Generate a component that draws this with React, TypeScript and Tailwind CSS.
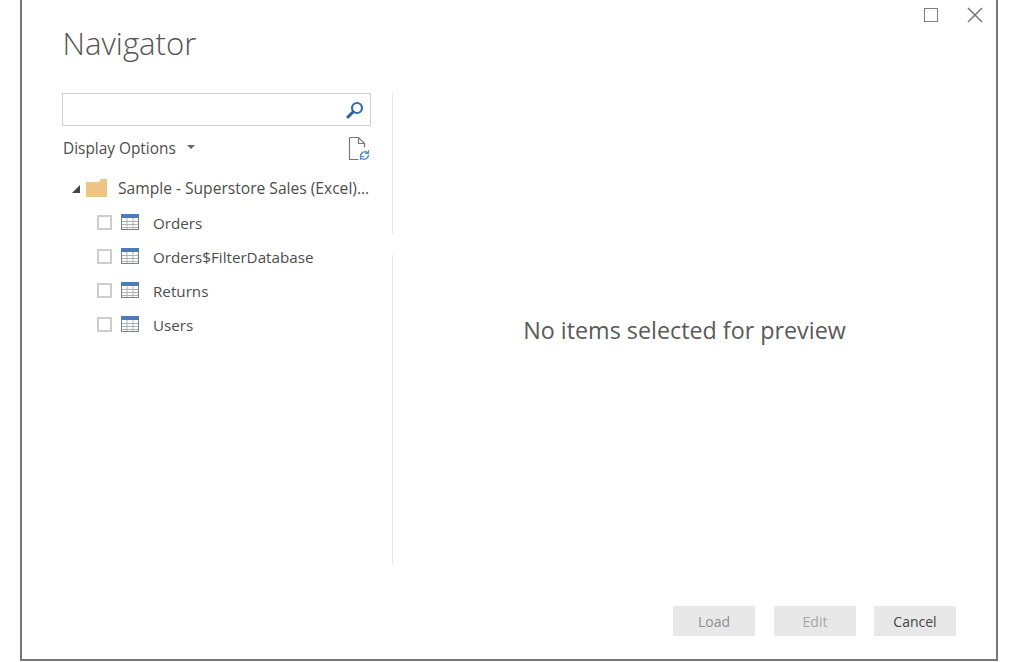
const font = "font-['Open_Sans','Noto_Sans',sans-serif]";

const tables = ["Orders", "Orders$FilterDatabase", "Returns", "Users"];

function TableIcon() {
  return (
    <svg width="18" height="16" viewBox="0 0 18 16" className="shrink-0">
      <rect x="0.5" y="0.5" width="17" height="15" fill="#fff" stroke="#7b8188" />
      <rect x="0" y="0" width="18" height="4" fill="#4a7cb8" />
      <path d="M1 7.500h16M1 10.500h16M1 13.500h16M6 4v11M12 4v11" stroke="#aeb2b6" fill="none" />
    </svg>
  );
}

function TableRow({ name }: { name: string }) {
  return (
    <div className="flex h-[34px] items-center pl-[35px]">
      <span className="mb-[2px] h-[15px] w-[15px] shrink-0 border-2 border-[#cdcdcd] bg-white" />
      <span className="mb-[2px] ml-[9px] flex">
        <TableIcon />
      </span>
      <span className="ml-[14px] text-[15.200px] text-[#4d4d4d]">{name}</span>
    </div>
  );
}

export default function App() {
  return (
    <div className={`h-[662px] w-[1024px] overflow-hidden bg-white px-5 ${font}`}>
      <div className="flex h-[661px] w-[978px] flex-col border-x-2 border-b-2 border-[#777]">
        <div className="flex h-[93px] shrink-0 items-start justify-between pl-[40.500px] pr-[13px]">
          <h1 className="mt-[21px] text-[31.200px] leading-[44px] font-light text-[#555]">Navigator</h1>
          <div className="mt-[7px] flex items-center gap-[29px]">
            <span className="h-[14px] w-[14px] border-[1.5px] border-[#808080]" />
            <svg width="16" height="16" viewBox="0 0 16 16">
              <path d="M1 1l14 14M15 1L1 15" stroke="#777" strokeWidth="1.500" fill="none" />
            </svg>
          </div>
        </div>

        <div className="flex h-[472px] shrink-0 pl-[40px]">
          <div className="w-[309px] shrink-0">
            <div className="flex h-[33px] items-center justify-end border-[1.5px] border-[#cfcfcf] bg-white pr-[6px]">
              <svg width="18" height="18" viewBox="0 0 18 18">
                <circle cx="11" cy="7" r="5" fill="none" stroke="#2f6fb0" strokeWidth="2.200" />
                <path d="M7.200 10.800L2 16" stroke="#2f5f96" strokeWidth="3" strokeLinecap="round" fill="none" />
              </svg>
            </div>
            <div className="mt-[10px] flex h-[26px] items-center justify-between pl-px">
              <div className="flex items-center">
                <span className="text-[15.400px] text-[#4d4d4d]">Display Options</span>
                <span className="mb-[3px] ml-[11px] h-0 w-0 border-x-[4px] border-t-[4px] border-x-transparent border-t-[#666]" />
              </div>
              <svg width="22" height="26" viewBox="0 0 22 26" className="mr-px">
                <path d="M1.500 1.500h9l6 6v4M10.500 1.500v6h6M1.500 1.500v22h9" fill="none" stroke="#777" strokeWidth="1.200" />
                <path d="M12.500 20a4.500 4.500 0 0 1 7.500-3M20.500 19a4.500 4.500 0 0 1-7.500 3" fill="none" stroke="#5a8fc4" strokeWidth="1.500" />
                <path d="M20.500 14v3.500H17M12.500 24v-3.500H16" fill="none" stroke="#5a8fc4" strokeWidth="1.200" />
              </svg>
            </div>
            <div className="mt-[10px] flex h-[34px] items-center pl-[10px]">
              <span className="h-0 w-0 border-b-[8px] border-l-[8px] border-b-[#444] border-l-transparent" />
              <svg width="21" height="18" viewBox="0 0 21 18" className="mb-[2px] ml-[6px] shrink-0">
                <path d="M0 3h13l2-3h6v18H0z" fill="#eec584" />
              </svg>
              <span className="ml-[11px] whitespace-nowrap text-[15.600px] text-[#4d4d4d]">Sample - Superstore Sales (Excel)...</span>
            </div>
            {tables.map((name) => (
              <TableRow key={name} name={name} />
            ))}
          </div>

          <div className="ml-[21px] flex w-px shrink-0 flex-col">
            <div className="h-[141px] bg-[#e6e6e6]" />
            <div className="h-[21px]" />
            <div className="flex-1 bg-[#e6e6e6]" />
          </div>

          <div className="flex flex-1 justify-center pt-[220px] pr-[20px]">
            <p className="text-[23.300px] leading-[34px] text-[#5a5a5a]">No items selected for preview</p>
          </div>
        </div>

        <div className="flex flex-1 items-start justify-end gap-[18px] pt-[41px] pr-[40px]">
          <button type="button" className="mr-px h-[30px] w-[82px] bg-[#e8e8e8] text-[14px] text-[#8f8f8f]">Load</button>
          <button type="button" className="h-[30px] w-[82px] bg-[#e8e8e8] text-[14px] text-[#a6a6a6]">Edit</button>
          <button type="button" className="h-[30px] w-[82px] bg-[#e8e8e8] text-[14px] text-[#444]">Cancel</button>
        </div>
      </div>
    </div>
  );
}
